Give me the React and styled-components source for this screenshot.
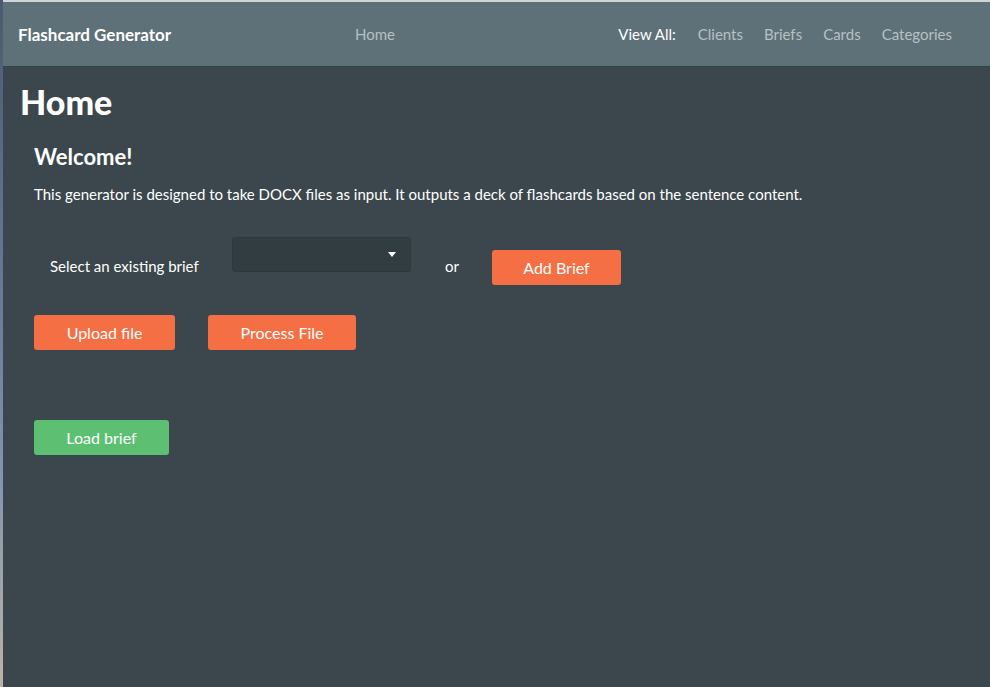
import React from "react"
import styled, { createGlobalStyle } from "styled-components"

const GlobalStyle = createGlobalStyle`
  html, body {
    margin: 0;
    padding: 0;
    height: 100%;
    background: #3b474d;
  }
  #root {
    height: 100%;
  }
  * {
    box-sizing: border-box;
  }
`

function App() {
  return (
    <>
      <GlobalStyle />
      <Screen>
        <Desktop />
        <Window>
          <NavBar>
            <Brand>Flashcard Generator</Brand>
            <NavHome>Home</NavHome>
            <NavRight>
              <NavLabel>View All:</NavLabel>
              <NavLink>Clients</NavLink>
              <NavLink>Briefs</NavLink>
              <NavLink>Cards</NavLink>
              <NavLink>Categories</NavLink>
            </NavRight>
          </NavBar>
          <Main>
            <Title>Home</Title>
            <Content>
              <Welcome>Welcome!</Welcome>
              <Intro>
                This generator is designed to take DOCX files as input. It outputs a deck of flashcards based on the sentence content.
              </Intro>
              <BriefRow>
                <SelectLabel>Select an existing brief</SelectLabel>
                <SelectBox>
                  <Caret />
                </SelectBox>
                <Or>or</Or>
                <Button $w={129} $top={13}>Add Brief</Button>
              </BriefRow>
              <FileRow>
                <Button $w={141}>Upload file</Button>
                <Button $w={148}>Process File</Button>
              </FileRow>
              <Button $w={135} $top={70} $green>Load brief</Button>
            </Content>
          </Main>
        </Window>
      </Screen>
    </>
  )
}

const Screen = styled.div`
  display: flex;
  height: 100%;
  min-height: 687px;
  font-family: "Lato", "Open Sans", sans-serif;
  color: #ffffff;
`

const Desktop = styled.div`
  width: 3px;
  flex-shrink: 0;
  background: linear-gradient(180deg, #4a5a6e 0%, #6a7c96 45%, #8495ab 70%, #b9b4a8 100%);
`

const Window = styled.div`
  flex: 1;
  display: flex;
  flex-direction: column;
  border-top: 2px solid #cfd4d7;
  background: #3b474d;
`

const NavBar = styled.nav`
  height: 65px;
  display: flex;
  align-items: center;
  padding: 0 38px 0 15px;
  background: #5e7078;
  border-bottom: 1px solid #34424a;
`

const Brand = styled.div`
  font-weight: 700;
  font-size: 17px;
  width: 337px;
`

const NavHome = styled.div`
  font-size: 15px;
  color: #b7c0c4;
`

const NavRight = styled.div`
  margin-left: auto;
  display: flex;
  gap: 21px;
  align-items: center;
`

const NavLabel = styled.span`
  font-size: 15px;
  color: #ffffff;
  margin-right: 1px;
`

const NavLink = styled.span`
  font-size: 15px;
  color: #b7c0c4;
`

const Main = styled.main`
  flex: 1;
  padding: 15px 17px;
`

const Title = styled.h1`
  margin: 0;
  font-size: 34px;
  line-height: 40px;
  font-weight: 900;
`

const Content = styled.section`
  padding: 0 14px;
`

const Welcome = styled.h2`
  margin: 21px 0 0;
  font-size: 22px;
  line-height: 28px;
  font-weight: 700;
`

const Intro = styled.p`
  margin: 13px 0 0;
  font-size: 15px;
  line-height: 20px;
`

const BriefRow = styled.div`
  display: flex;
  align-items: flex-start;
  margin-top: 33px;
  padding-left: 16px;
`

const SelectLabel = styled.span`
  font-size: 15px;
  margin-top: 20px;
  width: 182px;
`

const SelectBox = styled.div`
  position: relative;
  width: 179px;
  height: 35px;
  background: #323d42;
  border: 1px solid #2e383d;
  border-radius: 3px;
`

const Caret = styled.span`
  position: absolute;
  right: 14px;
  top: 14px;
  width: 0;
  height: 0;
  border-left: 4px solid transparent;
  border-right: 4px solid transparent;
  border-top: 5px solid #ffffff;
`

const Or = styled.span`
  font-size: 15px;
  margin: 20px 0 0 34px;
  width: 47px;
`

const Button = styled.button`
  display: block;
  width: ${(p) => p.$w}px;
  height: 35px;
  margin-top: ${(p) => p.$top || 0}px;
  border: none;
  border-radius: 3px;
  background: ${(p) => (p.$green ? "#5cbf72" : "#f46f43")};
  color: #ffffff;
  font-family: inherit;
  font-size: 16px;
  cursor: pointer;
`

const FileRow = styled.div`
  display: flex;
  gap: 33px;
  margin-top: 30px;
`

export default App
